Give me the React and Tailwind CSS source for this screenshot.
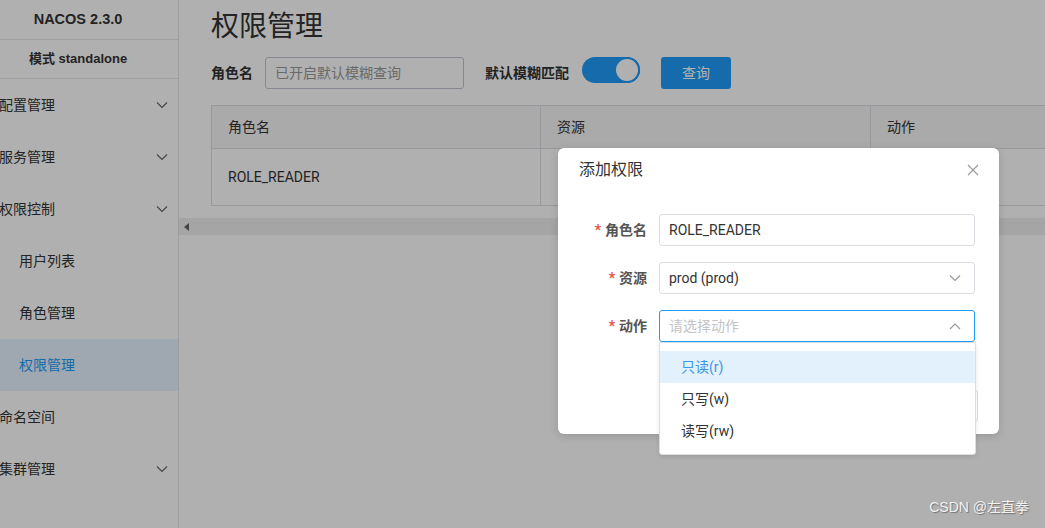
import React from "react";

const Chevron = ({ up = false, className = "" }) => (
  <svg width="12" height="8" viewBox="0 0 12 8" className={className} fill="none">
    {up ? (
      <polyline points="1,7 6,2 11,7" stroke="currentColor" strokeWidth="1.2" />
    ) : (
      <polyline points="1,1.5 6,6.5 11,1.5" stroke="currentColor" strokeWidth="1.2" />
    )}
  </svg>
);

const menu = [
  { t: "配置管理", arrow: true },
  { t: "服务管理", arrow: true },
  { t: "权限控制", arrow: true },
  { t: "用户列表", sub: true },
  { t: "角色管理", sub: true },
  { t: "权限管理", sub: true, active: true },
  { t: "命名空间" },
  { t: "集群管理", arrow: true },
];

export default function App() {
  return (
    <div className="relative w-[1045px] h-[528px] overflow-hidden bg-white flex text-[#333] font-['Roboto','Noto_Sans_CJK_SC',sans-serif]">
      {/* Sidebar */}
      <aside className="w-[179px] shrink-0 h-full border-r border-[#e4e4e4] bg-white flex flex-col">
        <div className="h-[40px] border-b border-[#e6e6e6] flex items-center justify-center pr-[22px] font-bold text-[14.5px] text-[#333] font-['Liberation_Sans','Noto_Sans_CJK_SC',sans-serif]">
          NACOS 2.3.0
        </div>
        <div className="h-[39px] border-b border-[#e6e6e6] flex items-center justify-center pr-[22px] font-bold text-[13px] text-[#333] font-['Liberation_Sans','Noto_Sans_CJK_SC',sans-serif]">
          模式 standalone
        </div>
        {menu.map((m) => (
          <div
            key={m.t}
            className={`h-[52px] flex items-center justify-between pr-[10px] text-[14px] ${
              m.active ? "bg-[#e6f4ff] text-[#209bfa]" : "text-[#333]"
            } ${m.sub ? "pl-[19px]" : "-ml-[1px]"}`}
          >
            <span>{m.t}</span>
            {m.arrow && <Chevron className="text-[#666]" />}
          </div>
        ))}
      </aside>

      {/* Main */}
      <main className="flex-1 min-w-0 flex flex-col">
        <div className="pl-[32px]">
          <h1 className="pt-[7px] text-[28px] leading-[40px] text-[#333] font-normal">权限管理</h1>
          <div className="mt-[10px] flex items-start h-[32px]">
            <span className="text-[14px] font-bold text-[#333] leading-[32px]">角色名</span>
            <div className="ml-[12px] w-[199px] h-[32px] border border-[#c4c6cf] rounded-[3px] bg-white flex items-center pl-[9px] text-[14px] text-[#999]">
              已开启默认模糊查询
            </div>
            <span className="ml-[21px] text-[14px] font-bold text-[#333] leading-[32px]">默认模糊匹配</span>
            <div className="ml-[13px] w-[58px] h-[26px] rounded-full bg-[#209bfa] flex items-center justify-end">
              <div className="w-[26px] h-[26px] rounded-full bg-white border-2 border-[#209bfa]" />
            </div>
            <button className="ml-[21px] w-[70px] h-[32px] rounded-[3px] bg-[#209bfa] text-white text-[14px]">查询</button>
          </div>
          <div className="mt-[16px] w-[1000px] border border-[#dcdee3]">
            <div className="flex h-[43px] bg-[#f6f6f6] border-b border-[#dcdee3] text-[14px] text-[#333]">
              <div className="w-[329px] border-r border-[#dcdee3] flex items-center pl-[16px]">角色名</div>
              <div className="w-[330px] border-r border-[#dcdee3] flex items-center pl-[16px]">资源</div>
              <div className="flex-1 flex items-center pl-[16px]">动作</div>
            </div>
            <div className="flex h-[56px] text-[14px] text-[#333]">
              <div className="w-[329px] border-r border-[#dcdee3] flex items-center pl-[16px]">ROLE_READER</div>
              <div className="w-[330px] border-r border-[#dcdee3]" />
              <div className="flex-1" />
            </div>
          </div>
        </div>
        <div className="mt-[12px] h-[17px] bg-[#f0f0f0] flex items-center pl-[5px]">
          <svg width="5" height="8" viewBox="0 0 5 8">
            <polygon points="5,0 0,4 5,8" fill="#666" />
          </svg>
        </div>
      </main>

      {/* Overlay */}
      <div className="absolute inset-0 bg-black/[0.31]" />

      {/* Dialog */}
      <div className="absolute left-[558px] top-[148px] w-[441px] h-[286px] bg-white rounded-[6px] shadow-[0_2px_8px_rgba(0,0,0,0.15)] pl-[21px] pr-[24px] pt-[10px]">
        <div className="flex items-center justify-between h-[24px]">
          <span className="text-[16px] text-[#333]">添加权限</span>
          <svg width="12" height="12" viewBox="0 0 12 12" className="-mr-[4px]">
            <path d="M1 1 L11 11 M11 1 L1 11" stroke="#999" strokeWidth="1.1" />
          </svg>
        </div>
        <div className="mt-[32px] flex flex-col gap-[16px]">
          {[
            { l: "角色名", v: "ROLE_READER" },
            { l: "资源", v: "prod (prod)", sel: true },
            { l: "动作", v: "请选择动作", sel: true, focus: true },
          ].map((r) => (
            <div key={r.l} className="flex items-center h-[32px]">
              <div className="w-[80px] pr-[12px] text-right text-[14px] font-bold text-[#555]">
                <span className="text-[#e8513b] mr-[4px]">*</span>
                {r.l}
              </div>
              <div
                className={`flex-1 h-[32px] rounded-[3px] border flex items-center justify-between pl-[9px] pr-[13px] text-[14px] ${
                  r.focus ? "border-[#209bfa] text-[#c4c4c4]" : "border-[#dcdee3] text-[#333]"
                }`}
              >
                <span>{r.v}</span>
                {r.sel && <Chevron up={r.focus} className="text-[#999]" />}
              </div>
            </div>
          ))}
        </div>
        <div className="mt-[48px] flex justify-end gap-[8px] -mr-[3px]">
          <button className="h-[32px] px-[16px] rounded-[3px] bg-[#209bfa] text-white text-[14px]">确定</button>
          <button className="h-[32px] px-[16px] rounded-[3px] border border-[#dcdee3] bg-white text-[#333] text-[14px]">取消</button>
        </div>
      </div>

      {/* Dropdown */}
      <div className="absolute left-[659px] top-[342px] w-[317px] h-[113px] bg-white border border-[#dcdee3] rounded-b-[3px] shadow-[0_2px_4px_rgba(0,0,0,0.1)] py-[8px]">
        <div className="h-[32px] flex items-center pl-[21px] bg-[#e3f1fc] text-[#3a98ec] text-[14px]">只读(r)</div>
        <div className="h-[32px] flex items-center pl-[21px] text-[#333] text-[14px]">只写(w)</div>
        <div className="h-[32px] flex items-center pl-[21px] text-[#333] text-[14px]">读写(rw)</div>
      </div>

      {/* Watermark */}
      <div className="absolute right-[16px] bottom-[10px] text-[14px] text-[#f2f2f2] [text-shadow:1px_1px_1px_rgba(0,0,0,0.35)] font-['Liberation_Sans','Noto_Sans_CJK_SC',sans-serif]">
        CSDN @左直拳
      </div>
    </div>
  );
}
